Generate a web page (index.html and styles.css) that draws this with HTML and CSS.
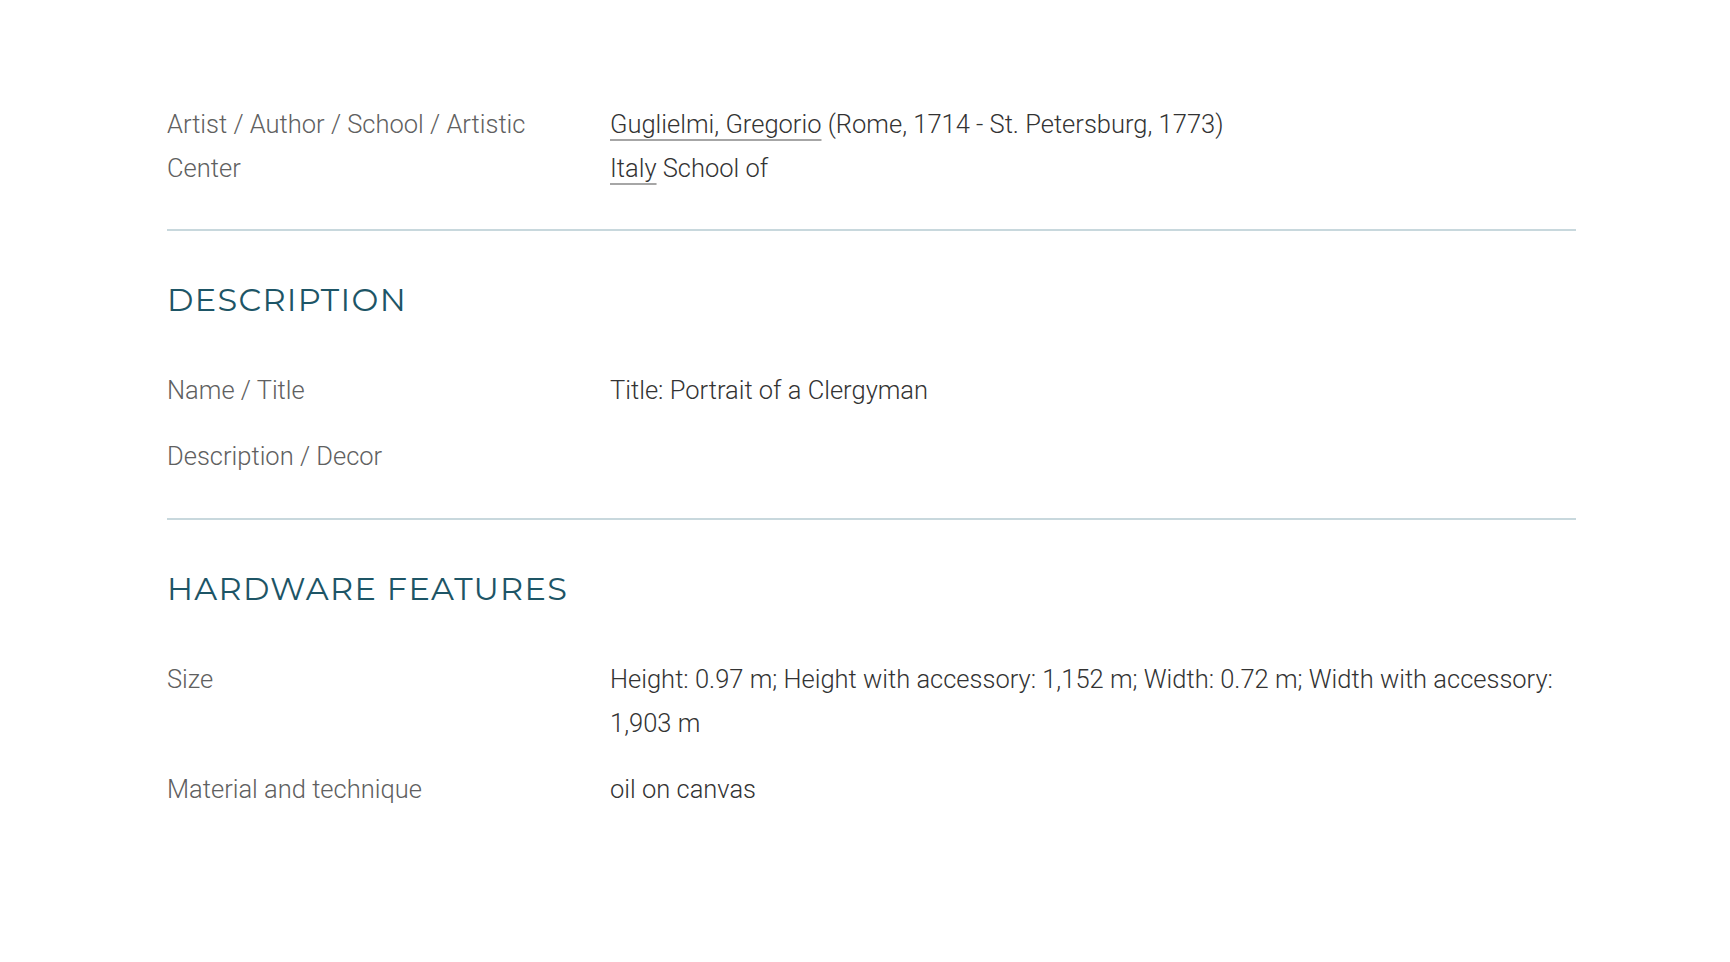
FILE: index.html
```html
<!DOCTYPE html>
<html>
<head>
  <meta charset="UTF-8">
  <title>Portrait of a Clergyman</title>
  <link rel="stylesheet" href="styles.css">
</head>
<body>
  <div class="record">
    <div class="section first">
      <div class="row">
        <div class="label">Artist / Author / School / Artistic Center</div>
        <div class="value">
          <div><a href="#">Guglielmi, Gregorio</a> (Rome, 1714 - St. Petersburg, 1773)</div>
          <div><a href="#">Italy</a> School of</div>
        </div>
      </div>
    </div>

    <div class="section">
      <h2>Description</h2>
      <div class="row">
        <div class="label">Name / Title</div>
        <div class="value">Title: Portrait of a Clergyman</div>
      </div>
      <div class="row">
        <div class="label">Description / Decor</div>
        <div class="value"></div>
      </div>
    </div>

    <div class="section last">
      <h2>Hardware features</h2>
      <div class="row">
        <div class="label">Size</div>
        <div class="value">Height: 0.97 m; Height with accessory: 1,152 m; Width: 0.72 m; Width with accessory: 1,903 m</div>
      </div>
      <div class="row">
        <div class="label">Material and technique</div>
        <div class="value">oil on canvas</div>
      </div>
    </div>
  </div>
</body>
</html>
```

FILE: styles.css
```css
* {
  margin: 0;
  padding: 0;
  box-sizing: border-box;
}

body {
  font-family: Roboto, 'Liberation Sans', Arial, sans-serif;
  font-weight: 300;
  background: #fff;
  color: #333;
}

.record {
  margin-left: 167px;
  width: 1409px;
}

.section {
  padding: 49px 0 40px;
  border-bottom: 2px solid #c8d8dd;
}

.section.first {
  padding-top: 102px;
  padding-bottom: 39px;
}

.section.last {
  border-bottom: none;
}

h2 {
  font-family: Montserrat, Lato, 'Noto Sans', sans-serif;
  font-weight: 400;
  font-size: 32px;
  line-height: 40px;
  text-transform: uppercase;
  letter-spacing: 1.3px;
  color: #1d5566;
  margin-bottom: 48px;
}

.row {
  display: grid;
  grid-template-columns: 443px 1fr;
  font-size: 25.5px;
  line-height: 44px;
  margin-bottom: 22px;
}

.row:last-child {
  margin-bottom: 0;
}

.label {
  color: #606060;
  padding-right: 40px;
}

.value {
  color: #333;
  min-height: 44px;
}

.value a {
  color: #333;
  text-decoration: underline;
  text-decoration-color: #a6a6a6;
  text-decoration-thickness: 2px;
  text-underline-offset: 6px;
}
```
